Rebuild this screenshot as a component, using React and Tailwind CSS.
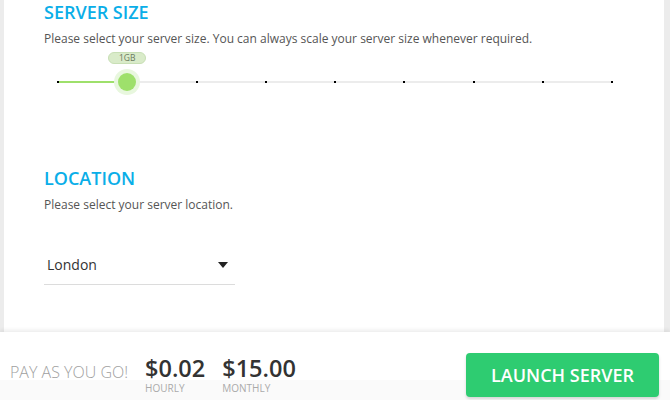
import React, { useState } from 'react';

const ticks = [0, 1, 2, 3, 4, 5, 6, 7, 8];

const SizeSlider = ({ value }) => {
  const pct = (value / (ticks.length - 1)) * 100;
  return (
    <div className="relative ml-[14px] mr-[52px] h-[60px]">
      <div className="absolute left-0 right-0 top-[34px] h-[2px] bg-[#ececec]" />
      <div className="absolute left-0 top-[34px] h-[2px] bg-[#9ee06b]" style={{ width: `${pct}%` }} />
      {ticks.map((t) => (
        <div
          key={t}
          className="absolute top-[34px] h-[2px] w-[2px] -ml-px bg-black"
          style={{ left: `${(t / (ticks.length - 1)) * 100}%` }}
        />
      ))}
      <div className="absolute top-[35px]" style={{ left: `${pct}%` }}>
        <div className="absolute -left-[13px] -top-[13px] h-[26px] w-[26px] rounded-full bg-[#e8f7de]" />
        <div className="absolute -left-[9px] -top-[9px] h-[18px] w-[18px] rounded-full bg-[#9ee06b]" />
        <div className="absolute -left-[19px] -top-[30px] flex h-[12px] w-[38px] items-center justify-center rounded-full border border-[#c8dfb5] bg-[#d9ebc9] text-[8.5px] leading-none text-[#6b7a60]">
          1GB
        </div>
      </div>
    </div>
  );
};

export default function App() {
  const [size] = useState(1);
  const [location] = useState('London');

  return (
    <div className="relative h-[400px] w-[670px] overflow-hidden bg-[#ececec] font-['Open_Sans',sans-serif]">
      <div className="ml-[4px] mr-[6px] h-[400px] bg-white pl-[40px] pt-px">
        <h2 className="text-[18px] font-semibold leading-[22px] text-[#0aaee8]">SERVER SIZE</h2>
        <p className="mt-[8px] text-[12px] leading-[16px] text-[#555]">
          Please select your server size. You can always scale your server size whenever required.
        </p>
        <SizeSlider value={size} />

        <h2 className="mt-[60px] text-[18px] font-semibold leading-[22px] text-[#0aaee8]">LOCATION</h2>
        <p className="mt-[8px] text-[12px] leading-[16px] text-[#555]">Please select your server location.</p>

        <div className="mt-[42px] flex w-[191px] items-center justify-between border-b border-[#dcdcdc] pb-[9px] pl-[3px] pr-[7px]">
          <span className="text-[14px] leading-[20px] text-[#333]">{location}</span>
          <span className="h-0 w-0 border-x-[5px] border-t-[6px] border-x-transparent border-t-[#222]" />
        </div>
      </div>

      <div className="absolute bottom-0 left-0 right-0 h-[68px] bg-white shadow-[0_-2px_4px_rgba(0,0,0,0.08)]">
        <div className="absolute bottom-0 left-0 right-0 h-[20px] bg-[#fafafa]" />
        <div className="relative flex h-full items-center pl-[10px] pr-[11px]">
          <span className="mt-[12px] text-[16px] font-light leading-none text-[#a0a0a0]">PAY AS YOU GO!</span>
          <div className="ml-[17px] mt-[16px] flex flex-col">
            <span className="text-[23.5px] font-semibold leading-[26px] text-[#333]">$0.02</span>
            <span className="mt-[2px] text-[10px] leading-[11px] text-[#aaa]">HOURLY</span>
          </div>
          <div className="ml-[17px] mt-[16px] flex flex-col">
            <span className="text-[23.5px] font-semibold leading-[26px] text-[#333]">$15.00</span>
            <span className="mt-[2px] text-[10px] leading-[11px] text-[#aaa]">MONTHLY</span>
          </div>
          <button className="ml-auto mt-[18px] h-[44px] w-[193px] rounded-[4px] bg-[#2ecc71] text-[18px] font-semibold text-white shadow-[0_2px_3px_rgba(0,0,0,0.15)]">
            LAUNCH SERVER
          </button>
        </div>
      </div>
    </div>
  );
}
